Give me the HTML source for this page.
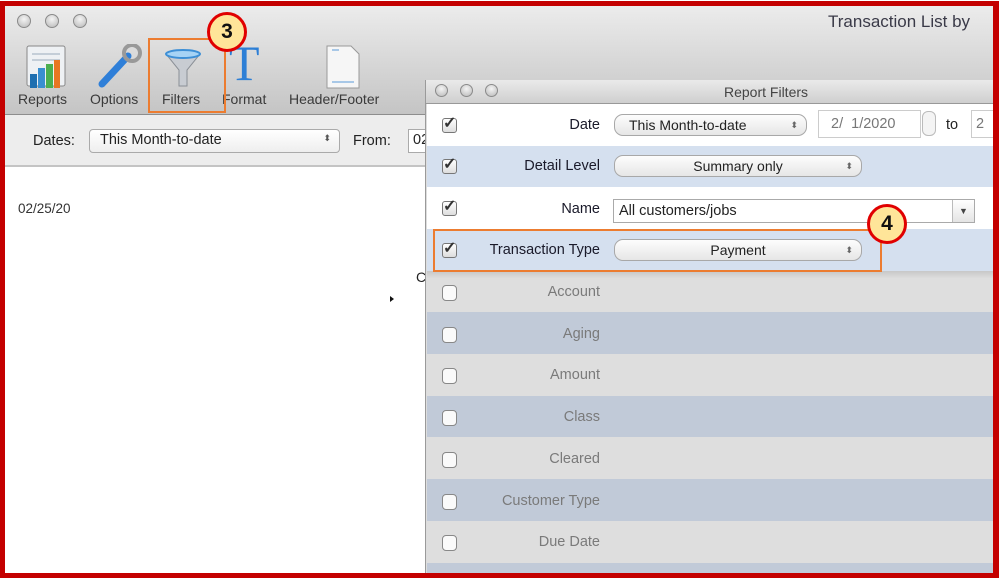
<!DOCTYPE html>
<html><head><meta charset="utf-8"><style>
*{margin:0;padding:0;box-sizing:border-box}
body{width:999px;height:579px;position:relative;overflow:hidden;background:#fff;font-family:"Liberation Sans",sans-serif;color:#222}
.a{position:absolute}
.frame{left:0;top:1px;width:999px;height:577px;border:5px solid #c40000;border-right-width:6px}
.tl{width:14px;height:14px;border-radius:50%;background:radial-gradient(circle at 50% 35%,#f4f4f4,#b8b8b8);border:1px solid #8a8a8a}
.tb{font-size:14px;color:#3a3a3a}
.pop{border:1px solid #a8a8a8;border-radius:9px;background:linear-gradient(#fdfdfd,#e6e6e6);font-size:14px;color:#222;text-align:center;line-height:20px}
.cb{width:15px;height:15px;border:1px solid #777;border-radius:3px;background:linear-gradient(#fff,#ddd)}
.ck{font-size:16px;line-height:13px;color:#333;font-weight:bold}
.lbl{font-size:14.5px;text-align:right;width:170px;color:#1a1a2a}
.row{left:427px;width:566px}
.ucb{width:15px;height:16px;border:1px solid #888;border-radius:4px;background:#fafafa}
.ul{font-size:14.5px;color:#7a7a7a;text-align:right;width:170px}
.badge{width:40px;height:40px;border-radius:50%;border:3px solid #e00000;background:#ffe599;font-weight:bold;font-size:21px;text-align:center;line-height:34px;color:#111}
</style></head><body>
<div class="a" style="left:5px;top:5px;width:990px;height:110px;background:linear-gradient(#ececec,#c4c4c4)"></div>
<div class="a" style="left:5px;top:114px;width:990px;height:1px;background:#8d8d8d"></div>
<div class="a" style="left:5px;top:115px;width:990px;height:50px;background:#ededed"></div>
<div class="a" style="left:5px;top:165px;width:990px;height:2px;background:#c4c4c4"></div>
<div class="a tl" style="left:17px;top:14px"></div>
<div class="a tl" style="left:45px;top:14px"></div>
<div class="a tl" style="left:73px;top:14px"></div>
<div class="a" style="left:828px;top:12px;font-size:17px;color:#3a3a48">Transaction List by</div>
<svg class="a" style="left:24px;top:44px" width="48" height="46"><rect x="3" y="2" width="38" height="40" rx="2" fill="#eef1f4" stroke="#888"/><line x1="8" y1="10" x2="36" y2="10" stroke="#9ab"/><line x1="8" y1="16" x2="36" y2="16" stroke="#9ab"/><rect x="14" y="24" width="7" height="20" fill="#3a8fd0"/><rect x="22" y="20" width="7" height="24" fill="#4caf50"/><rect x="30" y="16" width="6" height="28" fill="#e87722"/><rect x="6" y="30" width="7" height="14" fill="#1e6fb0"/></svg>
<svg class="a" style="left:96px;top:44px" width="48" height="46"><line x1="6" y1="40" x2="32" y2="12" stroke="#2f7fd8" stroke-width="7" stroke-linecap="round"/><circle cx="36" cy="9" r="8" fill="none" stroke="#999" stroke-width="4"/></svg>
<svg class="a" style="left:163px;top:48px" width="40" height="42"><path d="M3 6 Q20 0 37 6 L24 22 L24 38 L16 38 L16 22 Z" fill="#c8ccd2" stroke="#8a8f96"/><ellipse cx="20" cy="6" rx="17" ry="4" fill="#a6d3f5" stroke="#3d8fd6" stroke-width="2"/></svg>
<div class="a" style="left:229px;top:38px;font-family:'Liberation Serif',serif;font-size:50px;color:#2d7fd6;line-height:50px">T</div>
<svg class="a" style="left:325px;top:44px" width="36" height="46"><path d="M2 2 H26 L34 10 V44 H2 Z" fill="#f6f6f6" stroke="#999"/><line x1="7" y1="38" x2="29" y2="38" stroke="#5a9ad8"/><line x1="7" y1="6" x2="14" y2="6" stroke="#5a9ad8"/></svg>
<div class="a tb" style="left:18px;top:91px">Reports</div>
<div class="a tb" style="left:90px;top:91px">Options</div>
<div class="a tb" style="left:162px;top:91px">Filters</div>
<div class="a tb" style="left:222px;top:91px">Format</div>
<div class="a tb" style="left:289px;top:91px">Header/Footer</div>
<div class="a" style="left:148px;top:38px;width:78px;height:75px;border:2px solid #ec7c30"></div>
<div class="a badge" style="left:207px;top:12px">3</div>
<div class="a" style="left:33px;top:133px;font-size:14.5px">Dates:</div>
<div class="a" style="left:89px;top:129px;width:251px;height:24px;border:1px solid #aaa;border-radius:4px;background:linear-gradient(#fff,#eee);font-size:14.5px;padding:2px 10px">This Month-to-date<span style="position:absolute;right:8px;top:3px;font-size:9px;color:#555">⬍</span></div>
<div class="a" style="left:353px;top:133px;font-size:14.5px">From:</div>
<div class="a" style="left:408px;top:129px;width:30px;height:24px;border:1px solid #aaa;background:#fff;font-size:14.5px;padding:2px 4px">02</div>
<div class="a" style="left:18px;top:201px;font-size:13.5px;color:#333">02/25/20</div>
<div class="a" style="left:416px;top:269px;font-size:14px">C</div>
<div class="a" style="left:390px;top:296px;width:0;height:0;border-left:4px solid #111;border-top:3px solid transparent;border-bottom:3px solid transparent"></div>
<div class="a" style="left:425px;top:80px;width:570px;height:495px;background:#ddd;border-left:1px solid #9a9a9a"></div>
<div class="a" style="left:426px;top:80px;width:567px;height:24px;background:linear-gradient(#eaeaea,#cfcfcf);border-bottom:1px solid #999"></div>
<div class="a tl" style="left:435px;top:84px;width:13px;height:13px"></div>
<div class="a tl" style="left:460px;top:84px;width:13px;height:13px"></div>
<div class="a tl" style="left:485px;top:84px;width:13px;height:13px"></div>
<div class="a" style="left:724px;top:84px;font-size:14px;color:#444">Report Filters</div>
<div class="a row" style="top:104px;height:42px;background:#fff"></div>
<div class="a row" style="top:146px;height:41px;background:#d5e0ef"></div>
<div class="a row" style="top:187px;height:42px;background:#fff"></div>
<div class="a row" style="top:229px;height:42px;background:#d5e0ef"></div>
<div class="a row" style="top:271px;height:8px;background:linear-gradient(#c8c8c8,#e0e0e0)"></div>
<div class="a cb" style="left:442px;top:118px"></div><div class="a ck" style="left:443px;top:117px">✓</div>
<div class="a lbl" style="left:430px;top:117px">Date</div>
<div class="a pop" style="left:614px;top:114px;width:193px;height:22px;text-align:left;padding-left:14px">This Month-to-date<span style="position:absolute;right:8px;top:0;font-size:9px;color:#666">⬍</span></div>
<div class="a" style="left:818px;top:110px;width:103px;height:28px;border:1px solid #ccc;background:#fff;font-size:14.5px;color:#777;padding:5px 0 0 12px">2/&nbsp; 1/2020</div>
<div class="a" style="left:922px;top:111px;width:14px;height:25px;border:1px solid #bbb;border-radius:6px;background:#f4f4f4"></div>
<div class="a" style="left:946px;top:117px;font-size:14.5px">to</div>
<div class="a" style="left:971px;top:110px;width:30px;height:28px;border:1px solid #ccc;background:#fff;font-size:14.5px;color:#777;padding:5px 0 0 4px">2</div>
<div class="a cb" style="left:442px;top:159px"></div><div class="a ck" style="left:443px;top:158px">✓</div>
<div class="a lbl" style="left:430px;top:158px">Detail Level</div>
<div class="a pop" style="left:614px;top:155px;width:248px;height:22px">Summary only<span style="position:absolute;right:8px;top:0;font-size:9px;color:#666">⬍</span></div>
<div class="a cb" style="left:442px;top:201px"></div><div class="a ck" style="left:443px;top:200px">✓</div>
<div class="a lbl" style="left:430px;top:201px">Name</div>
<div class="a" style="left:613px;top:199px;width:362px;height:24px;border:1px solid #aaa;background:#fff;font-size:14.5px;padding:3px 5px">All customers/jobs<span style="position:absolute;right:0;top:0;width:22px;height:22px;border-left:1px solid #bbb;background:linear-gradient(#fff,#e4e4e4);font-size:9px;text-align:center;line-height:22px;color:#444">▼</span></div>
<div class="a cb" style="left:442px;top:243px"></div><div class="a ck" style="left:443px;top:242px">✓</div>
<div class="a lbl" style="left:430px;top:242px">Transaction Type</div>
<div class="a pop" style="left:614px;top:239px;width:248px;height:22px">Payment<span style="position:absolute;right:8px;top:0;font-size:9px;color:#666">⬍</span></div>
<div class="a" style="left:433px;top:229px;width:449px;height:43px;border:2px solid #ec7c30"></div>
<div class="a badge" style="left:867px;top:204px">4</div>
<div class="a row" style="top:279px;height:33px;background:#dedede"></div>
<div class="a row" style="top:312px;height:42px;background:#c1cad8"></div>
<div class="a row" style="top:354px;height:42px;background:#dedede"></div>
<div class="a row" style="top:396px;height:41px;background:#c1cad8"></div>
<div class="a row" style="top:437px;height:42px;background:#dedede"></div>
<div class="a row" style="top:479px;height:42px;background:#c1cad8"></div>
<div class="a row" style="top:521px;height:42px;background:#dedede"></div>
<div class="a row" style="top:563px;height:10px;background:#c1cad8"></div>
<div class="a ucb" style="left:442px;top:285px"></div><div class="a ul" style="left:430px;top:284px">Account</div>
<div class="a ucb" style="left:442px;top:327px"></div><div class="a ul" style="left:430px;top:326px">Aging</div>
<div class="a ucb" style="left:442px;top:368px"></div><div class="a ul" style="left:430px;top:367px">Amount</div>
<div class="a ucb" style="left:442px;top:410px"></div><div class="a ul" style="left:430px;top:409px">Class</div>
<div class="a ucb" style="left:442px;top:452px"></div><div class="a ul" style="left:430px;top:451px">Cleared</div>
<div class="a ucb" style="left:442px;top:494px"></div><div class="a ul" style="left:430px;top:493px">Customer Type</div>
<div class="a ucb" style="left:442px;top:535px"></div><div class="a ul" style="left:430px;top:534px">Due Date</div>
<div class="a frame"></div>
</body></html>
